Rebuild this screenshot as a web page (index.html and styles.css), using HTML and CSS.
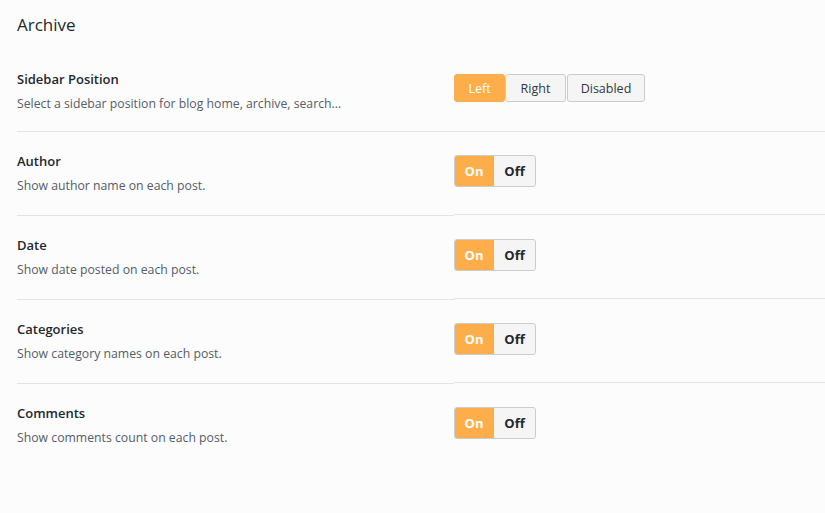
FILE: index.html
```html
<!DOCTYPE html>
<html>
<head>
<meta charset="utf-8">
<link rel="stylesheet" href="styles.css">
</head>
<body>
<div class="page">
  <h1 class="title">Archive</h1>
  <div class="settings">
    <div class="row first">
      <div class="info">
        <div class="label">Sidebar Position</div>
        <div class="desc">Select a sidebar position for blog home, archive, search...</div>
      </div>
      <div class="control">
        <div class="btn-group">
          <span class="btn active">Left</span>
          <span class="btn">Right</span>
          <span class="btn">Disabled</span>
        </div>
      </div>
    </div>
    <div class="row">
      <div class="info">
        <div class="label">Author</div>
        <div class="desc">Show author name on each post.</div>
      </div>
      <div class="control">
        <div class="toggle"><span class="on">On</span><span class="off">Off</span></div>
      </div>
    </div>
    <div class="row">
      <div class="info">
        <div class="label">Date</div>
        <div class="desc">Show date posted on each post.</div>
      </div>
      <div class="control">
        <div class="toggle"><span class="on">On</span><span class="off">Off</span></div>
      </div>
    </div>
    <div class="row">
      <div class="info">
        <div class="label">Categories</div>
        <div class="desc">Show category names on each post.</div>
      </div>
      <div class="control">
        <div class="toggle"><span class="on">On</span><span class="off">Off</span></div>
      </div>
    </div>
    <div class="row last">
      <div class="info">
        <div class="label">Comments</div>
        <div class="desc">Show comments count on each post.</div>
      </div>
      <div class="control">
        <div class="toggle"><span class="on">On</span><span class="off">Off</span></div>
      </div>
    </div>
  </div>
</div>
</body>
</html>
```

FILE: styles.css
```css
html, body {
  margin: 0;
  padding: 0;
  background: #fcfcfc;
}
body {
  font-family: "Open Sans", "Noto Sans", "Liberation Sans", sans-serif;
  color: #23282d;
  width: 825px;
  height: 513px;
  overflow: hidden;
}
.page {
  padding-left: 17px;
}
.title {
  margin: 0;
  padding-top: 13px;
  font-size: 17px;
  font-weight: 500;
  line-height: 24px;
  color: #23282d;
}
.settings {
  margin-top: 12px;
}
.row {
  display: grid;
  grid-template-columns: 437px 1fr;
}
.info {
  padding: 19px 0 19px;
  border-bottom: 1px solid #e2e4e7;
}
.row.first {
  border-bottom: 1px solid #e2e4e7;
}
.row.first .info {
  border-bottom: none;
  padding: 20px 0 17px;
}
.control {
  padding-top: 23px;
  border-bottom: 1px solid #e2e4e7;
  margin-bottom: 1px;
}
.row.first .control {
  border-bottom: none;
  margin-bottom: 0;
  padding-top: 25px;
}
.row.last .info,
.row.last .control {
  border-bottom: none;
}
.label {
  font-size: 13px;
  font-weight: 600;
  line-height: 20px;
  color: #23282d;
}
.desc {
  margin-top: 5px;
  font-size: 12.25px;
  line-height: 20px;
  color: #555d66;
}
.btn-group {
  display: flex;
}
.btn {
  box-sizing: border-box;
  height: 28px;
  padding-top: 2px;
  line-height: 24px;
  font-size: 12.5px;
  border: 1px solid #ccc;
  background: #f5f5f5;
  color: #32373c;
  text-align: center;
  border-radius: 3px;
}
.btn:nth-child(1) { width: 51px; }
.btn:nth-child(2) { width: 61px; }
.btn:nth-child(3) { width: 78px; margin-left: 1px; }
.btn.active {
  background: #fdae4b;
  border-color: #fdae4b;
  color: #fff;
}
.toggle {
  display: flex;
  width: 82px;
  height: 32px;
  box-sizing: border-box;
  border: 1px solid #ccc;
  border-radius: 3px;
  overflow: hidden;
  background: #f5f5f5;
}
.toggle span {
  display: flex;
  align-items: center;
  justify-content: center;
  font-size: 13px;
  font-weight: 700;
}
.toggle .on {
  width: 40px;
  margin: -1px 0 -1px -1px;
  background: #fdae4b;
  color: #fff;
}
.toggle .off {
  flex: 1;
  color: #23282d;
}
```
